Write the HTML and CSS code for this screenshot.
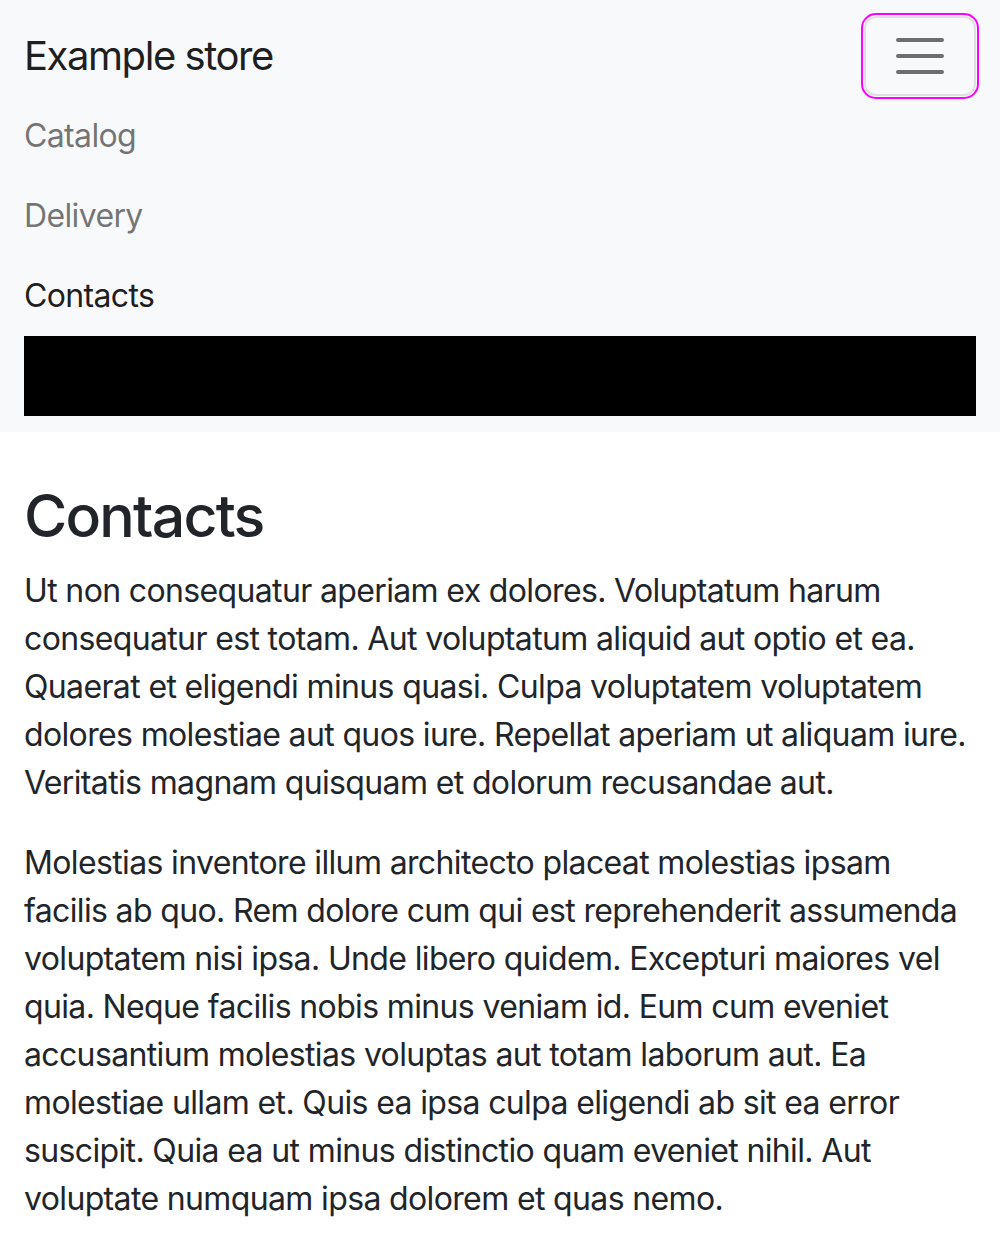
FILE: index.html
```html
<!DOCTYPE html>
<html lang="en">
<head>
<meta charset="utf-8">
<title>Contacts - Example store</title>
<link rel="stylesheet" href="styles.css">
</head>
<body>
<nav class="navbar">
  <div class="nav-inner">
    <a class="brand" href="#">Example store</a>
    <button class="toggler" type="button" aria-label="Toggle navigation">
      <svg class="toggler-icon" viewBox="0 0 30 30" width="60" height="60" aria-hidden="true">
        <path d="M4 7h22M4 15h22M4 23h22" stroke="rgba(33,37,41,0.65)" stroke-width="2" stroke-linecap="round" fill="none"/>
      </svg>
    </button>
    <div class="collapse">
      <ul class="nav-list">
        <li><a class="nav-link" href="#">Catalog</a></li>
        <li><a class="nav-link" href="#">Delivery</a></li>
        <li><a class="nav-link active" href="#">Contacts</a></li>
      </ul>
      <div class="black-box"></div>
    </div>
  </div>
</nav>
<main class="content">
  <h1 class="title">Contacts</h1>
  <p class="para">Ut non consequatur aperiam ex dolores. Voluptatum harum consequatur est totam. Aut voluptatum aliquid aut optio et ea. Quaerat et eligendi minus quasi. Culpa voluptatem voluptatem dolores molestiae aut quos iure. Repellat aperiam ut aliquam iure. Veritatis magnam quisquam et dolorum recusandae aut.</p>
  <p class="para">Molestias inventore illum architecto placeat molestias ipsam facilis ab quo. Rem dolore cum qui est reprehenderit assumenda voluptatem nisi ipsa. Unde libero quidem. Excepturi maiores vel quia. Neque facilis nobis minus veniam id. Eum cum eveniet accusantium molestias voluptas aut totam laborum aut. Ea molestiae ullam et. Quis ea ipsa culpa eligendi ab sit ea error suscipit. Quia ea ut minus distinctio quam eveniet nihil. Aut voluptate numquam ipsa dolorem et quas nemo.</p>
</main>
</body>
</html>
```
FILE: styles.css
```css
* { box-sizing: border-box; }
html, body { margin: 0; padding: 0; }
body {
  font-family: Inter, "Noto Sans", "Liberation Sans", sans-serif;
  font-size: 32px;
  line-height: 48px;
  letter-spacing: -0.02em;
  color: #212529;
  background: #fff;
}
.navbar {
  background: #f8f9fa;
  padding: 16px 0;
}
.nav-inner {
  display: flex;
  flex-wrap: wrap;
  align-items: center;
  justify-content: space-between;
  padding: 0 24px;
}
.brand {
  font-size: 40px;
  line-height: 60px;
  letter-spacing: -0.036em;
  padding: 10px 0;
  color: rgba(0,0,0,0.9);
  text-decoration: none;
  margin-right: 32px;
}
.toggler {
  width: 112px;
  height: 80px;
  padding: 8px 24px;
  background: transparent;
  border: 2px solid rgba(0,0,0,0.1);
  border-radius: 12px;
  outline: 2px solid #ff00ff;
  outline-offset: 1px;
  display: flex;
  align-items: center;
  justify-content: center;
  line-height: 1;
}
.toggler-icon { display: block; }
.collapse {
  flex-basis: 100%;
  flex-grow: 1;
}
.nav-list {
  list-style: none;
  margin: 0;
  padding: 0;
  display: flex;
  flex-direction: column;
}
.nav-link {
  display: block;
  padding: 16px 0;
  color: rgba(0,0,0,0.55);
  text-decoration: none;
}
.nav-link.active { color: rgba(0,0,0,0.9); }
.black-box {
  height: 80px;
  background: #000;
}
.content {
  padding: 0 24px;
  margin-top: 48px;
}
.title {
  font-size: 59px;
  line-height: 71px;
  font-weight: 500;
  letter-spacing: -0.03em;
  margin: 0 0 16px;
}
.para {
  margin: 0 0 32px;
}
```
